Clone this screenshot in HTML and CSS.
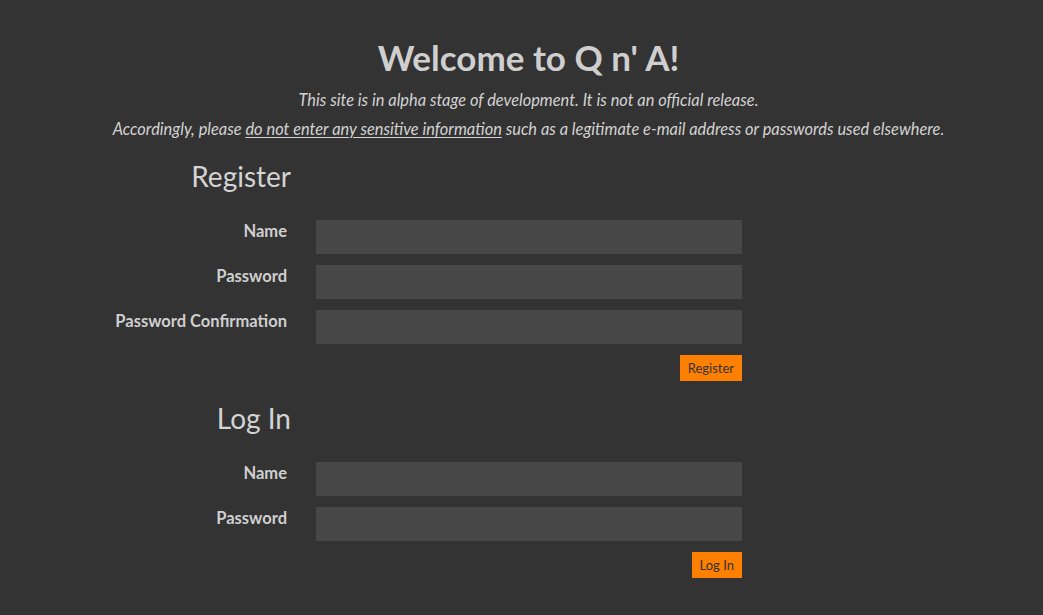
FILE: index.html
```html
<!DOCTYPE html>
<html>
<head>
<meta charset="utf-8">
<link rel="stylesheet" href="styles.css">
</head>
<body>
<header class="intro">
  <h1 class="title">Welcome to Q n' A!</h1>
  <p class="note">This site is in alpha stage of development. It is not an official release.</p>
  <p class="note">Accordingly, please <u>do not enter any sensitive information</u> such as a legitimate e-mail address or passwords used elsewhere.</p>
</header>
<section class="form-block">
  <h2 class="form-title">Register</h2>
  <div class="row"><label class="label">Name</label><div class="field"></div></div>
  <div class="row"><label class="label">Password</label><div class="field"></div></div>
  <div class="row"><label class="label">Password Confirmation</label><div class="field"></div></div>
  <div class="actions"><button class="btn">Register</button></div>
</section>
<section class="form-block">
  <h2 class="form-title login">Log In</h2>
  <div class="row"><label class="label">Name</label><div class="field"></div></div>
  <div class="row"><label class="label">Password</label><div class="field"></div></div>
  <div class="actions"><button class="btn">Log In</button></div>
</section>
</body>
</html>
```

FILE: styles.css
```css
html, body { background: #333333; }
body {
  margin: 0;
  padding: 0 8px;
  font-family: Lato, "Open Sans", sans-serif;
  color: #cfcfcf;
}
.intro {
  padding-left: 14px;
  text-align: center;
  padding-top: 35px;
}
.title {
  margin: 0;
  font-size: 35px;
  font-weight: 700;
  line-height: 44px;
  margin-bottom: 6px;
  color: #cfcfcf;
}
.note {
  margin: 0;
  font-style: italic;
  font-size: 16.4px;
  line-height: 29px;
  color: #d2d2d2;
}
.note u { text-decoration-thickness: 1px; text-underline-offset: 2px; }
.form-block {
  width: 734px;
  display: flex;
  flex-direction: column;
}
.form-title {
  margin: 16px 0 0;
  width: 283px;
  text-align: right;
  font-size: 28px;
  font-weight: 400;
  line-height: 34px;
  color: #d4d4d4;
}
.form-title.login { margin-top: 20px; }
.row {
  display: grid;
  grid-template-columns: 279px 426px;
  column-gap: 29px;
  margin-top: 11px;
  height: 34px;
}
.form-title + .row { margin-top: 27px; }
.label {
  text-align: right;
  font-weight: 700;
  font-size: 16.5px;
  line-height: 20px;
  padding-top: 1px;
}
.field { background: #474747; height: 34px; }
.actions {
  display: flex;
  justify-content: flex-end;
  margin-top: 11px;
}
.btn {
  background: #ff7f00;
  border: none;
  color: #333;
  font-family: Lato, sans-serif;
  font-size: 13px;
  height: 26px;
  padding: 0 8px;
}
```
